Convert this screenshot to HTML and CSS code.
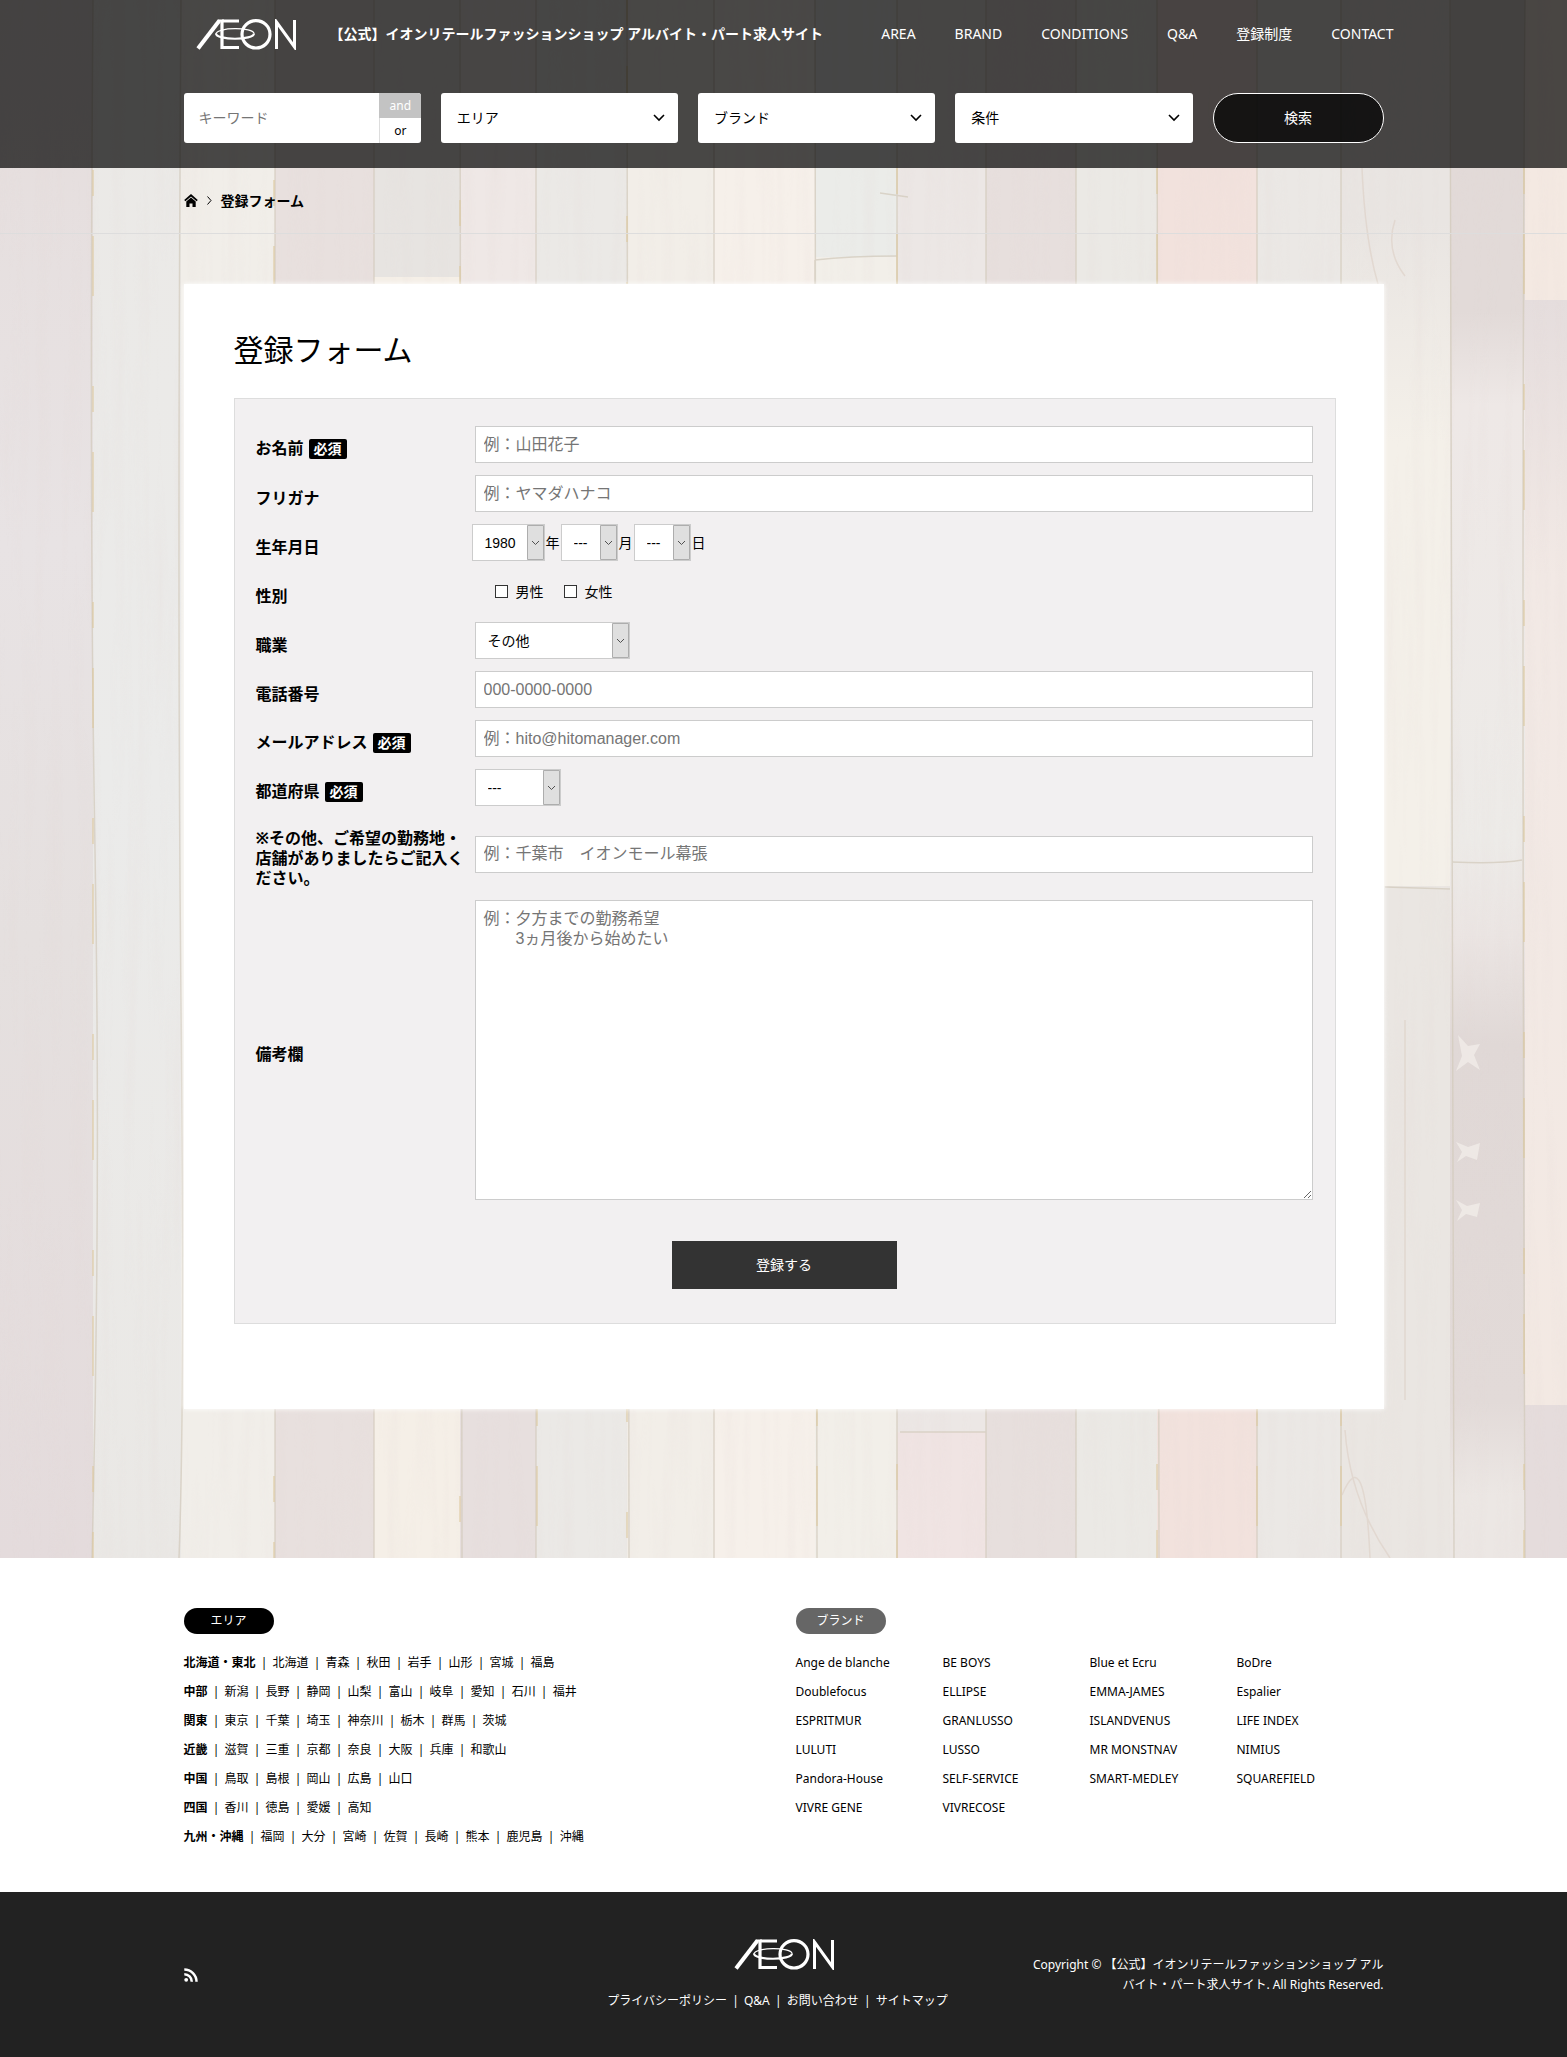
FILE: index.html
```html
<!DOCTYPE html>
<html lang="ja">
<head>
<meta charset="utf-8">
<meta name="viewport" content="width=device-width, initial-scale=1">
<title>登録フォーム | イオンリテールファッションショップ</title>
<link rel="stylesheet" href="styles.css">
</head>
<body>
<svg class="defs" width="0" height="0" aria-hidden="true">
  <symbol id="logo" viewBox="0 0 100 31">
    <g fill="none" stroke="#fff">
      <path stroke-width="4" d="M2 29.500L23.500 1.500"/>
      <path stroke-width="2" d="M22 1.500H28"/>
      <path stroke-width="3.200" d="M26 1V30M26 2H43M26 28.500H43"/>
      <ellipse cx="60" cy="15.300" rx="14" ry="13.700" stroke-width="3.200"/>
      <path stroke-width="1.200" d="M20 15C20 8 58 8 58 14.500"/>
      <path stroke-width="2.200" d="M20 14.500C20 21.500 58 21.500 58 14.500"/>
      <path stroke-width="3" d="M80.500 30V3L98.500 28V1"/>
    </g>
  </symbol>
</svg>
<div class="page">
  <svg class="planks" viewBox="0 0 1567 1558" preserveAspectRatio="none" aria-hidden="true">
    <defs>
      <linearGradient id="p1" x1="0" y1="0" x2="0" y2="1"><stop offset="0" stop-color="#e5dddc"/><stop offset=".35" stop-color="#e8e3e4"/><stop offset=".6" stop-color="#e5e0df"/><stop offset="1" stop-color="#e4dbdc"/></linearGradient>
      <linearGradient id="p2" x1="0" y1="0" x2="0" y2="1"><stop offset="0" stop-color="#ebe9e6"/><stop offset=".5" stop-color="#ebebea"/><stop offset="1" stop-color="#eae8e5"/></linearGradient>
      <linearGradient id="p3" x1="0" y1="0" x2="0" y2="1"><stop offset=".25" stop-color="#e9e5e2"/><stop offset=".5" stop-color="#f4f0e9"/><stop offset="1" stop-color="#f4f0e9"/></linearGradient>
      <linearGradient id="p4" x1="0" y1="0" x2="0" y2="1"><stop offset=".2" stop-color="#e2dad8"/><stop offset=".26" stop-color="#eee8e6"/><stop offset=".54" stop-color="#edebe8"/><stop offset=".6" stop-color="#ebe5e3"/><stop offset=".67" stop-color="#e0d8d6"/><stop offset=".9" stop-color="#e2dad8"/><stop offset=".96" stop-color="#ece7e4"/></linearGradient>
      <linearGradient id="p5" x1="0" y1="0" x2="0" y2="1"><stop offset="0" stop-color="#e5dddd"/><stop offset=".25" stop-color="#f2e9e5"/><stop offset="1" stop-color="#f3e9e3"/></linearGradient>
      <filter id="grain" x="0" y="0" width="100%" height="100%">
        <feTurbulence type="fractalNoise" baseFrequency="0.08 0.004" numOctaves="3" seed="4"/>
        <feColorMatrix values="0 0 0 0 .76  0 0 0 0 .68  0 0 0 0 .66  .8 0 0 0 -.35"/>
      </filter>
    </defs>
    <rect width="1567" height="1558" fill="#edeae6"/>
    <rect width="94" height="1558" fill="url(#p1)"/>
    <rect x="93" width="88" height="1558" fill="url(#p2)"/>
    <rect x="181" width="94" height="1558" fill="#f1eee9"/>
    <rect x="275" width="99" height="1558" fill="#e8e0de"/>
    <rect x="374" width="86" height="277" fill="#e7e4e1"/>
    <rect x="374" y="277" width="86" height="1281" fill="#f5efe7"/>
    <rect x="460" width="76" height="700" fill="#efe8e6"/>
    <rect x="460" y="700" width="76" height="858" fill="#e7dfde"/>
    <rect x="536" width="91" height="1558" fill="#ebe9e6"/>
    <rect x="627" width="87" height="1558" fill="#f2eee8"/>
    <rect x="714" width="102" height="1558" fill="#f6f0ea"/>
    <rect x="815" width="82" height="257" fill="#ebece9"/>
    <rect x="815" y="257" width="82" height="1301" fill="#f2efe9"/>
    <rect x="897" width="89" height="1432" fill="#ece7e5"/>
    <rect x="897" y="1432" width="89" height="126" fill="#f0e4e3"/>
    <rect x="986" width="90" height="1558" fill="#e7dfdd"/>
    <rect x="1076" width="81" height="1558" fill="#ebe9e5"/>
    <rect x="1157" width="100" height="1558" fill="#f2e2dd"/>
    <rect x="1257" width="84" height="1558" fill="#ebe8e5"/>
    <rect x="1341" width="109" height="1558" fill="#eae6e2"/>
    <rect x="1341" width="109" height="886" fill="url(#p3)"/>
    <rect x="1450" width="75" height="1558" fill="url(#p4)"/>
    <rect x="1525" width="42" height="300" fill="#f4e9e2"/>
    <rect x="1525" y="300" width="42" height="1105" fill="url(#p5)"/>
    <rect x="1525" y="1405" width="42" height="153" fill="#e5dcdc"/>
    <rect width="1567" height="1558" filter="url(#grain)" opacity=".5"/>
    <g fill="none" stroke="#d3cbbd" stroke-width="1.500" opacity=".75">
      <path d="M93 0Q89 500 95 850T92 1558M181 0Q177 600 181 1000T179 1558M275 0V1558M374 0V1558M460 0L462 1558M536 0V1558M627 0L629 1558M714 0V1558M815 0L817 1558M897 0V1558M986 0V1558M1076 0V1558M1157 0L1159 1558M1257 0V1558M1341 0V1558M1450 0L1454 1558M1525 0Q1521 500 1525 1558"/>
      <path d="M815 260Q850 256 897 256M815 260V300M880 193L908 197M900 1432H986M1385 887L1450 889M1452 862Q1500 864 1522 860"/>
    </g>
    <g fill="none" stroke="#dcc79c" stroke-width="1.500" opacity=".7" stroke-dasharray="26 40 60 90">
      <path d="M93 170V1558M274 180V1558M460 200V1558M537 1400V1558M627 0V1558M817 1400V1558M897 168V1558M1157 168V1558M1257 1400V1558M1341 1400V1558M1524 168V1558"/>
    </g>
    <g fill="none" stroke="#dccfc4" stroke-width="1.500" opacity=".6">
      <path d="M1362 168Q1365 240 1378 284M1395 220Q1385 250 1405 276M1342 1495Q1365 1440 1370 1558M1345 1430Q1350 1500 1390 1558M1405 1020V1400"/>
    </g>
    <g fill="#f4efeb" opacity=".7">
      <path d="M1458 1035L1468 1046L1480 1044L1474 1055L1480 1070L1468 1062L1456 1071L1462 1056ZM1456 1142L1468 1147L1480 1143L1477 1160L1466 1156L1457 1162L1462 1152ZM1456 1200L1467 1206L1480 1203L1477 1217L1466 1214L1457 1221L1462 1210Z"/>
    </g>
  </svg>

  <header class="header">
    <div class="wrap">
      <div class="header__bar">
        <a class="header__logo" href="#" aria-label="AEON"><svg width="100" height="31"><use href="#logo"/></svg></a>
        <p class="header__title">【公式】イオンリテールファッションショップ アルバイト・パート求人サイト</p>
        <nav class="nav">
          <a href="#">AREA</a><a href="#">BRAND</a><a href="#">CONDITIONS</a><a href="#">Q&amp;A</a><a href="#">登録制度</a><a href="#">CONTACT</a>
        </nav>
      </div>
      <form class="search">
        <div class="keyword">
          <input class="keyword__input" type="text" placeholder="キーワード" aria-label="キーワード">
          <div class="keyword__mode">
            <input type="radio" name="mode" id="mode-and" checked><label for="mode-and">and</label>
            <input type="radio" name="mode" id="mode-or"><label for="mode-or">or</label>
          </div>
        </div>
        <select class="search__select" aria-label="エリア"><option>エリア</option></select>
        <select class="search__select" aria-label="ブランド"><option>ブランド</option></select>
        <select class="search__select" aria-label="条件"><option>条件</option></select>
        <button class="search__button" type="button">検索</button>
      </form>
    </div>
  </header>

  <div class="crumbs">
    <div class="wrap crumbs__inner">
      <a href="#" aria-label="ホーム"><svg width="14" height="13" viewBox="0 0 14 13"><path d="M.8 6.600L7 1.200l6.200 5.400" fill="none" stroke="#000" stroke-width="1.800"/><path d="M2.300 7.500L7 3.500l4.700 4V13H8.500V9.500h-3V13H2.300z"/></svg></a>
      <svg width="5" height="9" viewBox="0 0 5 9"><path d="M.5.500L4 4.500.5 8.500" fill="none" stroke="#000"/></svg>
      <strong>登録フォーム</strong>
    </div>
  </div>

  <main class="wrap">
    <div class="card">
      <h1 class="card__title">登録フォーム</h1>
      <form class="entry">
        <div class="row">
          <label class="row__label" for="name">お名前<span class="badge">必須</span></label>
          <input class="field" id="name" type="text" placeholder="例：山田花子">
        </div>
        <div class="row">
          <label class="row__label" for="kana">フリガナ</label>
          <input class="field" id="kana" type="text" placeholder="例：ヤマダハナコ">
        </div>
        <div class="row">
          <label class="row__label" for="year">生年月日</label>
          <div class="date">
            <select class="pick pick--year" id="year"><option>1980</option></select>年
            <select class="pick pick--short" aria-label="月"><option>---</option></select>月
            <select class="pick pick--short" aria-label="日"><option>---</option></select>日
          </div>
        </div>
        <div class="row">
          <span class="row__label">性別</span>
          <div class="checks">
            <label><input type="checkbox">男性</label>
            <label><input type="checkbox">女性</label>
          </div>
        </div>
        <div class="row">
          <label class="row__label" for="job">職業</label>
          <select class="pick pick--job" id="job"><option>その他</option></select>
        </div>
        <div class="row">
          <label class="row__label" for="tel">電話番号</label>
          <input class="field" id="tel" type="tel" placeholder="000-0000-0000">
        </div>
        <div class="row">
          <label class="row__label" for="mail">メールアドレス<span class="badge">必須</span></label>
          <input class="field" id="mail" type="email" placeholder="例：hito@hitomanager.com">
        </div>
        <div class="row">
          <label class="row__label" for="pref">都道府県<span class="badge">必須</span></label>
          <select class="pick pick--pref" id="pref"><option>---</option></select>
        </div>
        <div class="row row--long">
          <label class="row__label" for="place">※その他、ご希望の勤務地・店舗がありましたらご記入ください。</label>
          <input class="field" id="place" type="text" placeholder="例：千葉市　イオンモール幕張">
        </div>
        <div class="row">
          <label class="row__label" for="note">備考欄</label>
          <textarea class="field field--area" id="note" placeholder="例：夕方までの勤務希望
　　3ヵ月後から始めたい"></textarea>
        </div>
        <button class="entry__submit" type="button">登録する</button>
      </form>
    </div>
  </main>
</div>

<section class="links">
  <div class="wrap links__grid">
    <div>
      <h2 class="pill">エリア</h2>
      <ul class="areas">
        <li><strong>北海道・東北</strong><i>|</i><a href="#">北海道</a><i>|</i><a href="#">青森</a><i>|</i><a href="#">秋田</a><i>|</i><a href="#">岩手</a><i>|</i><a href="#">山形</a><i>|</i><a href="#">宮城</a><i>|</i><a href="#">福島</a></li>
        <li><strong>中部</strong><i>|</i><a href="#">新潟</a><i>|</i><a href="#">長野</a><i>|</i><a href="#">静岡</a><i>|</i><a href="#">山梨</a><i>|</i><a href="#">富山</a><i>|</i><a href="#">岐阜</a><i>|</i><a href="#">愛知</a><i>|</i><a href="#">石川</a><i>|</i><a href="#">福井</a></li>
        <li><strong>関東</strong><i>|</i><a href="#">東京</a><i>|</i><a href="#">千葉</a><i>|</i><a href="#">埼玉</a><i>|</i><a href="#">神奈川</a><i>|</i><a href="#">栃木</a><i>|</i><a href="#">群馬</a><i>|</i><a href="#">茨城</a></li>
        <li><strong>近畿</strong><i>|</i><a href="#">滋賀</a><i>|</i><a href="#">三重</a><i>|</i><a href="#">京都</a><i>|</i><a href="#">奈良</a><i>|</i><a href="#">大阪</a><i>|</i><a href="#">兵庫</a><i>|</i><a href="#">和歌山</a></li>
        <li><strong>中国</strong><i>|</i><a href="#">鳥取</a><i>|</i><a href="#">島根</a><i>|</i><a href="#">岡山</a><i>|</i><a href="#">広島</a><i>|</i><a href="#">山口</a></li>
        <li><strong>四国</strong><i>|</i><a href="#">香川</a><i>|</i><a href="#">徳島</a><i>|</i><a href="#">愛媛</a><i>|</i><a href="#">高知</a></li>
        <li><strong>九州・沖縄</strong><i>|</i><a href="#">福岡</a><i>|</i><a href="#">大分</a><i>|</i><a href="#">宮崎</a><i>|</i><a href="#">佐賀</a><i>|</i><a href="#">長崎</a><i>|</i><a href="#">熊本</a><i>|</i><a href="#">鹿児島</a><i>|</i><a href="#">沖縄</a></li>
      </ul>
    </div>
    <div>
      <h2 class="pill pill--grey">ブランド</h2>
      <ul class="brands">
        <li><a href="#">Ange de blanche</a></li><li><a href="#">BE BOYS</a></li><li><a href="#">Blue et Ecru</a></li><li><a href="#">BoDre</a></li>
        <li><a href="#">Doublefocus</a></li><li><a href="#">ELLIPSE</a></li><li><a href="#">EMMA-JAMES</a></li><li><a href="#">Espalier</a></li>
        <li><a href="#">ESPRITMUR</a></li><li><a href="#">GRANLUSSO</a></li><li><a href="#">ISLANDVENUS</a></li><li><a href="#">LIFE INDEX</a></li>
        <li><a href="#">LULUTI</a></li><li><a href="#">LUSSO</a></li><li><a href="#">MR MONSTNAV</a></li><li><a href="#">NIMIUS</a></li>
        <li><a href="#">Pandora-House</a></li><li><a href="#">SELF-SERVICE</a></li><li><a href="#">SMART-MEDLEY</a></li><li><a href="#">SQUAREFIELD</a></li>
        <li><a href="#">VIVRE GENE</a></li><li><a href="#">VIVRECOSE</a></li>
      </ul>
    </div>
  </div>
</section>

<footer class="footer">
  <div class="wrap footer__grid">
    <a class="footer__rss" href="#" aria-label="RSS"><svg width="14" height="14" viewBox="0 0 14 14"><circle cx="2.200" cy="11.800" r="1.900" fill="#fff"/><path d="M.3 6.200a7.500 7.500 0 0 1 7.500 7.500M.3 1.500a12.200 12.200 0 0 1 12.200 12.200" fill="none" stroke="#fff" stroke-width="2.500"/></svg></a>
    <div class="footer__center">
      <a class="footer__logo" href="#" aria-label="AEON"><svg width="100" height="31"><use href="#logo"/></svg></a>
      <nav class="footer__nav"><a href="#">プライバシーポリシー</a><i>|</i><a href="#">Q&amp;A</a><i>|</i><a href="#">お問い合わせ</a><i>|</i><a href="#">サイトマップ</a></nav>
    </div>
    <p class="footer__copy">Copyright © 【公式】イオンリテールファッションショップ アルバイト・パート求人サイト. All Rights Reserved.</p>
  </div>
</footer>
</body>
</html>
```

FILE: styles.css
```css
*, *::before, *::after { box-sizing: border-box; }

body {
  margin: 0;
  background: #fff;
  color: #000;
  font: 14px/20px "Noto Sans", "Noto Sans CJK JP", sans-serif;
}

a { color: inherit; text-decoration: none; }
ul { margin: 0; padding: 0; list-style: none; }
svg { display: block; }
i { font-style: normal; }
.defs { position: absolute; }

.wrap {
  width: 100%;
  max-width: 1200px;
  margin: 0 auto;
}

.page {
  position: relative;
  z-index: 0;
  padding-bottom: 149px;
}

.planks {
  position: absolute;
  inset: 0;
  z-index: -1;
  width: 100%;
  height: 100%;
}

/* header */
.header {
  padding-bottom: 25px;
  background: rgba(0, 0, 0, .7);
  color: #fff;
}

.header__bar {
  display: flex;
  align-items: center;
  height: 68px;
  margin-right: -10px;
  padding-left: 12px;
}

.header__title {
  margin: 0 0 0 34px;
  font-weight: 700;
  white-space: nowrap;
}

.nav {
  display: flex;
  gap: 39px;
  margin-left: auto;
  white-space: nowrap;
}

.search {
  display: grid;
  grid-template-columns: repeat(4, 1fr) 171px;
  gap: 20px;
  height: 50px;
  margin-top: 25px;
}

.keyword {
  display: grid;
  grid-template-columns: 1fr 42px;
  overflow: hidden;
  border-radius: 3px;
  background: #fff;
}

.keyword__input {
  min-width: 0;
  border: 0;
  padding: 0 15px;
  background: none;
  font: inherit;
}

.keyword__input::placeholder { color: #757575; }

.keyword__mode {
  display: grid;
  grid-template-rows: 25px 25px;
}

.keyword__mode input {
  position: absolute;
  opacity: 0;
  pointer-events: none;
}

.keyword__mode label {
  border-left: 1px solid #ddd;
  color: #000;
  font-size: 12px;
  line-height: 25px;
  text-align: center;
}

.keyword__mode input:checked + label {
  border-color: #c3c3c3;
  background: #c3c3c3;
  color: #fff;
}

.search__select {
  min-width: 0;
  appearance: none;
  border: 0;
  border-radius: 3px;
  padding: 0 36px 0 16px;
  background: #fff url("data:image/svg+xml,%3Csvg xmlns='http://www.w3.org/2000/svg' width='12' height='8'%3E%3Cpath d='M1 1l5 5 5-5' fill='none' stroke='%23000' stroke-width='1.600'/%3E%3C/svg%3E") no-repeat right 13px center;
  color: #000;
  font: inherit;
}

.search__button {
  border: 1px solid #fff;
  border-radius: 25px;
  background: rgba(0, 0, 0, .7);
  color: #fff;
  font: inherit;
}

/* breadcrumbs */
.crumbs { border-bottom: 1px solid #ddd; }

.crumbs__inner {
  display: flex;
  align-items: center;
  gap: 9px;
  height: 65px;
}

/* form card */
.card {
  margin-top: 50px;
  padding: 51px 48px 85px 50px;
  background: #fff;
  box-shadow: 0 0 5px #fff;
}

.card__title {
  margin: 0 0 33px;
  font-size: 30px;
  font-weight: 400;
  line-height: 30px;
}

.entry {
  display: flex;
  flex-direction: column;
  gap: 12px;
  border: 1px solid #ddd;
  padding: 27px 22px 34px 21px;
  background: #f2f0f1;
}

.row {
  display: grid;
  grid-template-columns: 209px 1fr;
  column-gap: 10px;
  align-items: center;
  min-height: 37px;
}

.row--long { margin-top: 2px; }

.row__label {
  padding-top: 8px;
  font-size: 16px;
  font-weight: 700;
}

.badge {
  display: inline-block;
  margin-left: 5px;
  border-radius: 2px;
  padding: 0 5px;
  background: #000;
  color: #fff;
  font-size: 14px;
}

.field {
  width: 100%;
  height: 37px;
  border: 1px solid #ccc;
  padding: 0 8px;
  background: #fff;
  font: 16px/20px "Liberation Sans", "Noto Sans CJK JP", sans-serif;
}

.field::placeholder { color: #757575; }

.field--area {
  display: block;
  height: 300px;
  padding: 8px;
  resize: both;
}

.pick {
  height: 37px;
  appearance: none;
  border: 1px solid #ccc;
  border-radius: 0;
  padding: 0 18px 0 12px;
  background: #fff url("data:image/svg+xml,%3Csvg xmlns='http://www.w3.org/2000/svg' width='17' height='35'%3E%3Cpath d='M.5.500h16v34H.5z' fill='%23dfdfdf' stroke='%23adadad'/%3E%3Cpath d='M5 16l3.500 3.500L12 16' fill='none' stroke='%23505050'/%3E%3C/svg%3E") no-repeat right center;
  color: #000;
  font: 14px/20px "Liberation Sans", "Noto Sans CJK JP", sans-serif;
}

.pick--year { width: 73px; }
.pick--short { width: 57px; }
.pick--job { width: 155px; }
.pick--pref { width: 86px; }

.date {
  display: flex;
  align-items: center;
  gap: 1px;
  margin-left: -3px;
}

.checks {
  display: flex;
  gap: 20px;
  padding-left: 20px;
}

.checks label {
  display: flex;
  align-items: center;
  gap: 8px;
}

.checks input {
  width: 13px;
  height: 13px;
  margin: 0;
  appearance: none;
  border: 1px solid #333;
  background: #fff;
}

.checks input:checked { background: #333; }

.entry__submit {
  align-self: center;
  width: 225px;
  height: 48px;
  margin-top: 29px;
  border: 0;
  background: #333;
  color: #fff;
  font: inherit;
}

/* link lists */
.links {
  padding: 50px 0 41px;
  font-size: 12px;
  line-height: 29px;
}

.links__grid {
  display: grid;
  grid-template-columns: 1fr 1fr;
  gap: 24px;
}

.pill {
  width: 90px;
  margin: 0 0 14px;
  border-radius: 13px;
  background: #000;
  color: #fff;
  font-size: 12px;
  font-weight: 400;
  line-height: 26px;
  text-align: center;
}

.pill--grey { background: #666; }

.areas li { display: flex; }

.areas i,
.footer__nav i {
  width: 17px;
  text-align: center;
}

.brands {
  display: grid;
  grid-template-columns: repeat(4, 1fr);
}

/* footer */
.footer {
  padding: 47px 0;
  background: #222;
  color: #fff;
  font-size: 12px;
}

.footer__grid {
  display: grid;
  grid-template-columns: 1fr 360px 1fr;
  align-items: center;
}

.footer__center {
  display: flex;
  flex-direction: column;
  align-items: center;
  gap: 21px;
}

.footer__nav {
  display: flex;
  padding-right: 12px;
}

.footer__copy {
  width: 360px;
  margin: 0;
  justify-self: end;
  text-align: right;
}
```
